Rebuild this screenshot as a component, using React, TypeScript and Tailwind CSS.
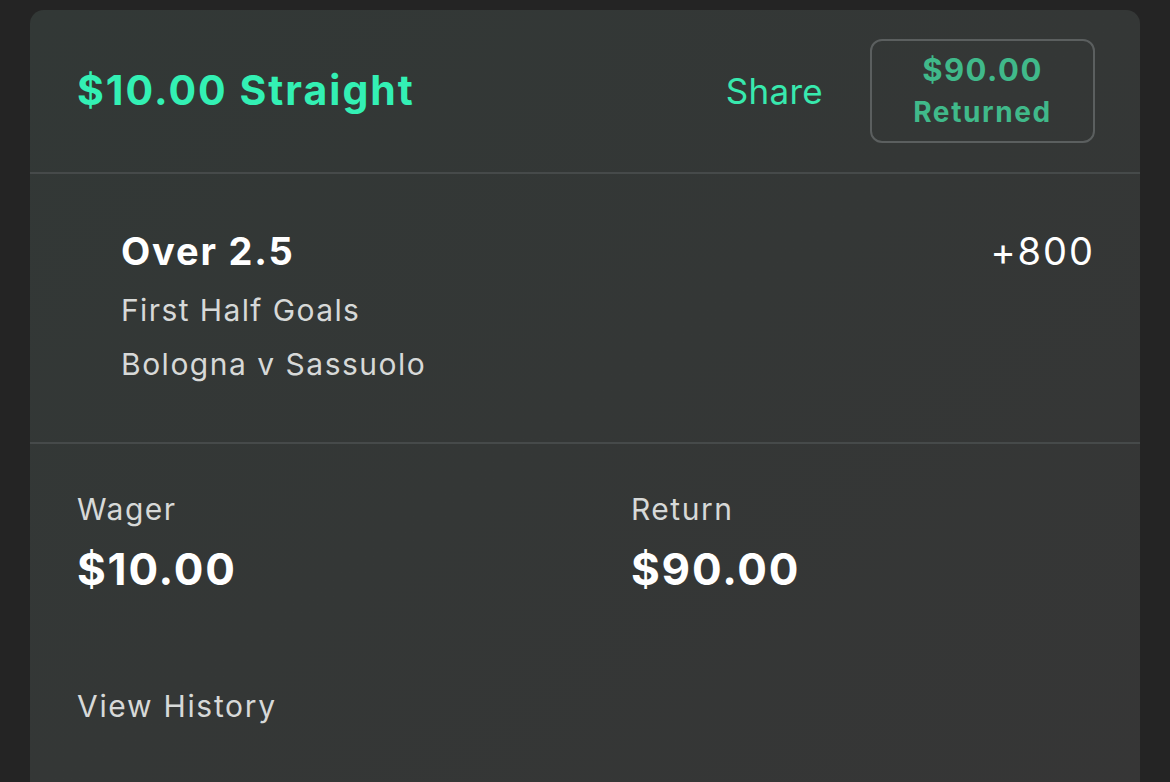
export default function App() {
  return (
    <div
      className="min-h-[782px] w-full bg-[#242424] px-[30px] pt-[10px] overflow-hidden"
      style={{ fontFamily: "Inter, 'Noto Sans', sans-serif" }}
    >
      <div className="h-[800px] rounded-t-[14px] bg-gradient-to-br from-[#323836] to-[#363636]">
        {/* Header */}
        <div className="flex h-[164px] items-center border-b-2 border-[#464a4a] pl-[47px] pr-[45px]">
          <h1 className="flex-1 text-[41px] font-bold tracking-[2px] text-[#33f0b4]">$10.00 Straight</h1>
          <span className="mr-[47px] text-[35px] tracking-[0.3px] text-[#38e9ae]">Share</span>
          <div className="flex h-[104px] w-[225px] flex-col items-center justify-center rounded-[12px] border-2 border-[#5b5f5f]">
            <span className="text-[31px] font-bold leading-[43px] tracking-[1.5px] text-[#40b98a]">$90.00</span>
            <span className="text-[28px] font-bold leading-[43px] tracking-[1.6px] text-[#40b98a]">Returned</span>
          </div>
        </div>

        {/* Selection */}
        <div className="flex h-[270px] border-b-2 border-[#464a4a] pl-[91px] pr-[45px] pt-[49px]">
          <div className="flex-1">
            <div className="text-[38px] font-bold leading-[56px] tracking-[1.8px] text-white">Over 2.5</div>
            <div className="mt-[4px] text-[30px] leading-[54px] tracking-[1.4px] text-[#d7d9d8]">First Half Goals</div>
            <div className="text-[30px] leading-[54px] tracking-[1.5px] text-[#d7d9d8]">Bologna v Sassuolo</div>
          </div>
          <div className="text-[38px] leading-[56px] tracking-[2px] text-white">+800</div>
        </div>

        {/* Totals */}
        <div className="grid grid-cols-[554px_1fr] pl-[47px] pt-[45px]">
          <div>
            <div className="text-[30px] leading-[40px] tracking-[1.5px] text-[#d7d9d8]">Wager</div>
            <div className="mt-[12px] text-[44px] font-bold leading-[56px] tracking-[1.8px] text-white">$10.00</div>
          </div>
          <div>
            <div className="text-[30px] leading-[40px] tracking-[1.5px] text-[#d7d9d8]">Return</div>
            <div className="mt-[12px] text-[44px] font-bold leading-[56px] tracking-[1.8px] text-white">$90.00</div>
          </div>
        </div>

        <div className="pl-[47px] pt-[89px] text-[30px] leading-[40px] tracking-[1.7px] text-[#d7d9d8]">View History</div>
      </div>
    </div>
  );
}
